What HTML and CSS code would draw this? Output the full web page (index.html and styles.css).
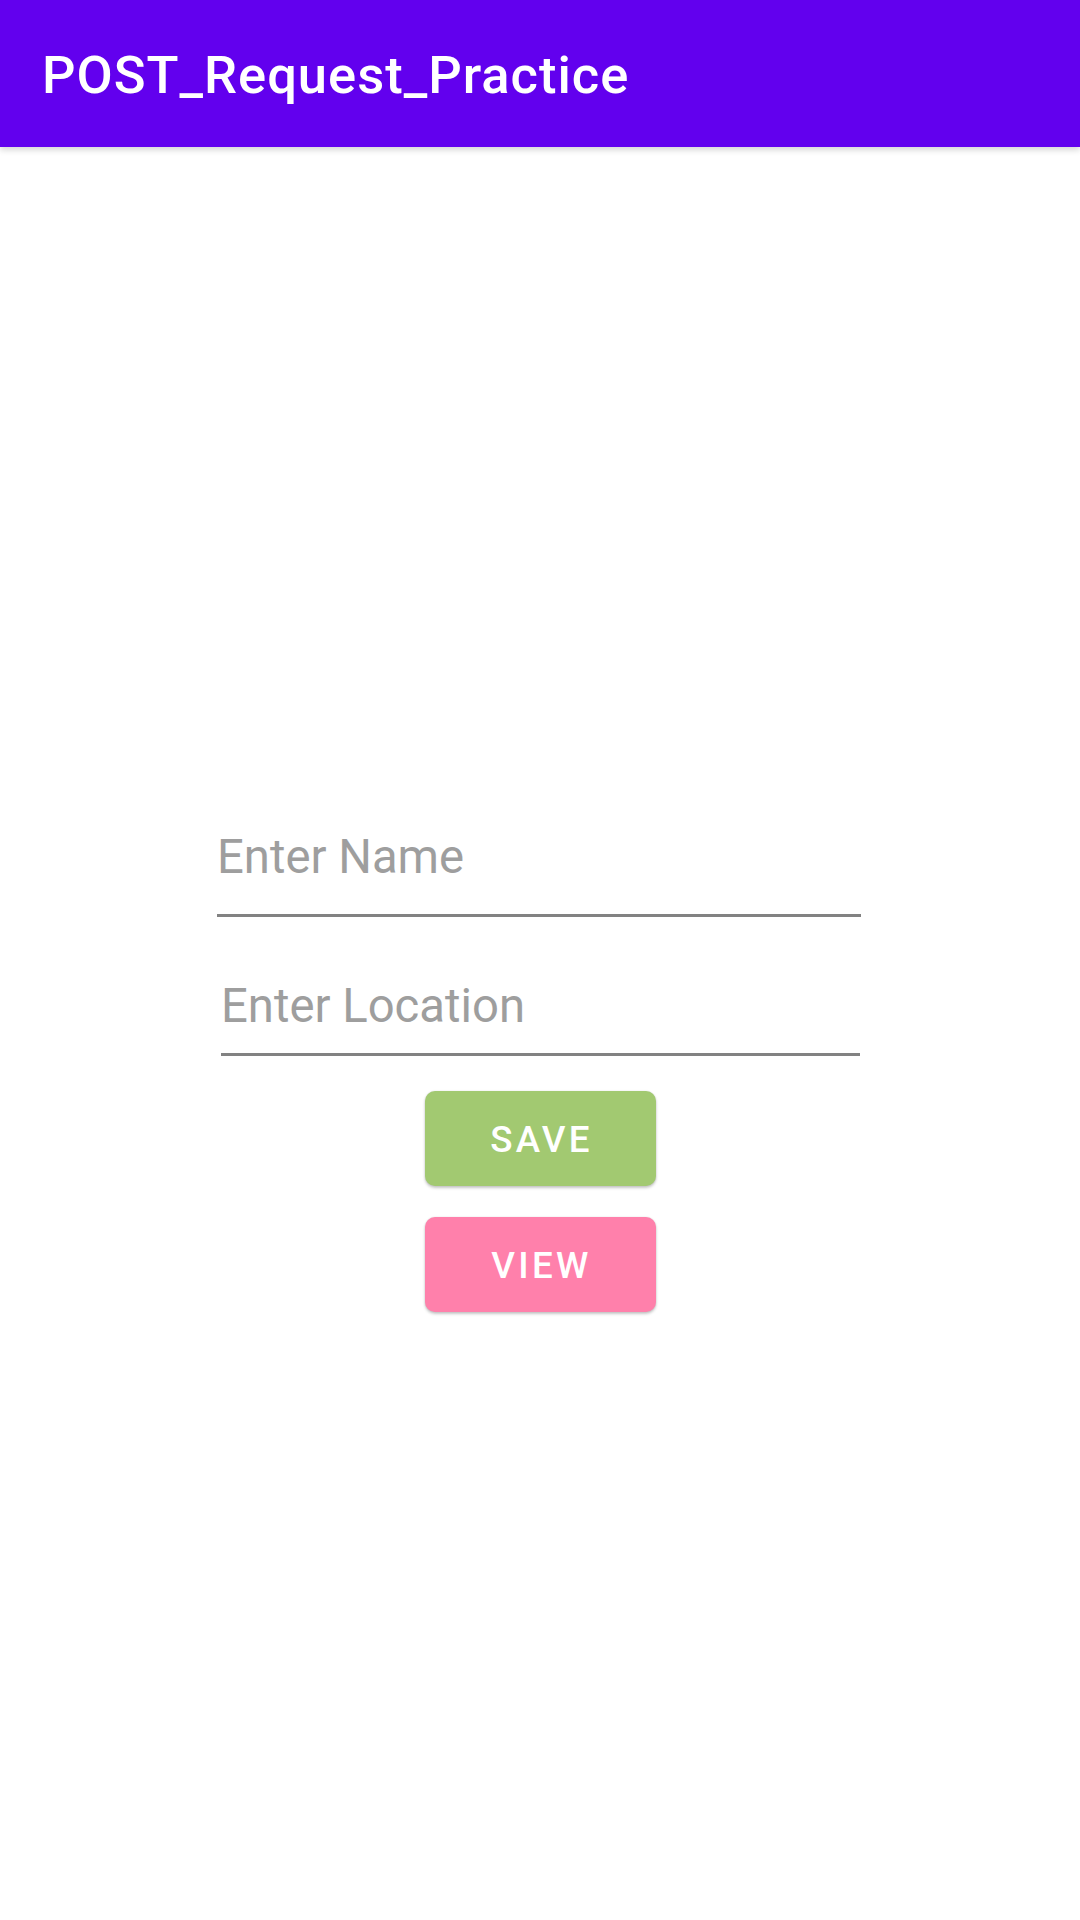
FILE: index.html
```html
<!DOCTYPE html>
<html lang="en">
<head>
<meta charset="utf-8">
<title>POST_Request_Practice</title>
<link rel="stylesheet" href="styles.css">
</head>
<body>
<header class="app-bar">
  <h1 class="app-title">POST_Request_Practice</h1>
</header>
<main class="content">
  <div class="field field-name"><span class="hint">Enter Name</span></div>
  <div class="field field-location"><span class="hint">Enter Location</span></div>
  <div class="buttons">
    <button class="btn btn-save" type="button">SAVE</button>
    <button class="btn btn-view" type="button">VIEW</button>
  </div>
</main>
</body>
</html>
```

FILE: styles.css
```css
* { box-sizing: border-box; }

html, body {
  margin: 0;
  padding: 0;
  background: #ffffff;
  font-family: Roboto, "Noto Sans", "Liberation Sans", sans-serif;
}

body {
  width: 1080px;
  height: 1920px;
  overflow: hidden;
}

.app-bar {
  position: relative;
  z-index: 2;
  height: 147px;
  background: #6200ee;
  padding: 45px 0 0 42px;
  box-shadow: 0 3px 6px rgba(0, 0, 0, 0.16);
}

.app-title {
  margin: 0;
  font-size: 52.5px;
  font-weight: 500;
  line-height: 61.5px;
  letter-spacing: 1px;
  color: #ffffff;
  white-space: nowrap;
}

.content {
  display: flex;
  flex-direction: column;
  align-items: center;
  padding-top: 682px;
}

.field {
  border-bottom: 3px solid #828282;
  font-size: 47.25px;
  line-height: 56px;
  color: #9e9e9e;
}

.field-name {
  width: 644px;
  padding-bottom: 29px;
  margin-left: -2px;
}

.field-location {
  width: 639px;
  padding-bottom: 19px;
  margin-top: 61px;
  margin-left: 1px;
}

.buttons {
  display: flex;
  flex-direction: column;
  gap: 31px;
  margin-top: 35px;
}

.btn {
  width: 231px;
  height: 95px;
  border: none;
  border-radius: 10px;
  padding: 2px 0 0 3px;
  font-family: Roboto, "Noto Sans", "Liberation Sans", sans-serif;
  font-size: 36.75px;
  font-weight: 500;
  letter-spacing: 3.28px;
  color: #ffffff;
  box-shadow: 0 2px 3px rgba(0, 0, 0, 0.22), 0 0 2px rgba(0, 0, 0, 0.1);
}

.btn-save { background: #a2c971; }
.btn-view { background: #ff80ab; }
```
